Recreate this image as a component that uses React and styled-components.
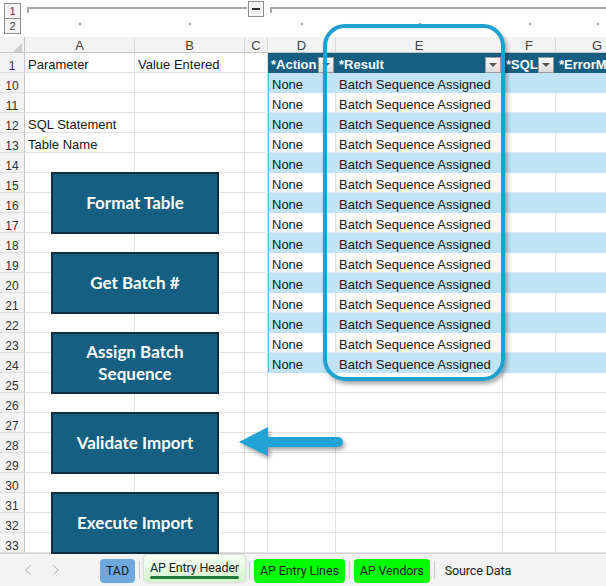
import React from "react"
import styled, { createGlobalStyle } from "styled-components"
import { ChevronLeft, ChevronRight } from "lucide-react"

const COLS = "25px 110px 110px 23px 68px 167px 53px 83px"

const GlobalStyle = createGlobalStyle`
  html, body {
    margin: 0;
    padding: 0;
  }
  body {
    width: 606px;
    height: 586px;
    overflow: hidden;
    background: #fff;
  }
`

const Page = styled.div`
  position: relative;
  width: 606px;
  height: 586px;
  overflow: hidden;
  display: flex;
  flex-direction: column;
  background: #fff;
  font-family: "Liberation Sans", Arial, sans-serif;
`

/* outline (grouping) bar */
const OutlineBar = styled.div`
  flex: none;
  display: grid;
  grid-template-columns: ${COLS};
  grid-template-rows: 17px 20px;
  height: 37px;
`

const LevelStack = styled.div`
  grid-row: 1 / span 2;
  display: flex;
  flex-direction: column;
  padding: 3px 0 0 4px;
`

const LevelButton = styled.div`
  width: 17px;
  height: 16px;
  box-sizing: border-box;
  border: 1px solid #8f8f8f;
  background: #f4f4f4;
  color: #444;
  font-size: 11px;
  line-height: 14px;
  text-align: center;

  & + & {
    margin-top: -1px;
  }
`

const Bracket = styled.div`
  grid-column: ${(p) => p.$span};
  display: flex;
  align-items: flex-start;
  padding-left: 2px;
`

const BracketLine = styled.div`
  flex: 1;
  height: 4px;
  margin-top: 7px;
  border-top: 2px solid #a8a8a8;
  border-left: 2px solid #a8a8a8;
`

const CollapseButton = styled.div`
  flex: none;
  width: 16px;
  height: 16px;
  box-sizing: border-box;
  margin: 1px 4px 0 1px;
  border: 1px solid #8f8f8f;
  background: #f4f4f4;
  display: flex;
  align-items: center;
  justify-content: center;

  &::before {
    content: "";
    width: 8px;
    height: 2px;
    background: #333;
  }
`

const DotCell = styled.div`
  display: flex;
  justify-content: center;
  padding-top: 6px;

  &::before {
    content: "";
    width: 2px;
    height: 2px;
    background: ${(p) => (p.$hidden ? "transparent" : "#9c9c9c")};
  }
`

/* column letters */
const ColumnHeaderRow = styled.div`
  flex: none;
  display: grid;
  grid-template-columns: ${COLS};
  height: 16px;
  box-sizing: border-box;
  background: #f3f3f3;
  border-bottom: 1px solid #c6c6c6;
`

const Corner = styled.div`
  position: relative;
  border-right: 1px solid #c6c6c6;

  &::after {
    content: "";
    position: absolute;
    right: 2px;
    bottom: 2px;
    border-left: 9px solid transparent;
    border-bottom: 9px solid #cfcfcf;
  }
`

const ColumnLetter = styled.div`
  border-right: 1px solid #d9d9d9;
  color: #444;
  font-size: 13px;
  line-height: 17px;
  text-align: center;
`

/* grid rows */
const SheetRow = styled.div`
  flex: none;
  display: grid;
  grid-template-columns: ${COLS};
  height: 20px;
`

const RowNumber = styled.div`
  box-sizing: border-box;
  height: 20px;
  padding-top: 3px;
  background: #f3f3f3;
  border-right: 1px solid #c6c6c6;
  border-bottom: 1px solid #dcdcdc;
  color: #333;
  font-size: 12px;
  line-height: 20px;
  text-align: center;
`

const Cell = styled.div`
  box-sizing: border-box;
  height: 20px;
  padding: 4px 3px 0;
  border-right: 1px solid #e1e1e1;
  border-bottom: 1px solid #e1e1e1;
  color: #161616;
  font-size: 13px;
  line-height: 16px;
  white-space: nowrap;
`

const TableCell = styled(Cell)`
  background: ${(p) => (p.$band ? "#c0e4f5" : "#fff")};
  border-right-color: ${(p) => (p.$band ? "#c0e4f5" : "#e1e1e1")};
  border-bottom-color: ${(p) => (p.$band ? "#c0e4f5" : "#d6e9f3")};
  border-left: ${(p) => (p.$first ? "1px solid #5eb1de" : "none")};
`

const HeadCell = styled(Cell)`
  display: flex;
  align-items: center;
  justify-content: space-between;
  padding-right: 1px;
  background: #156082;
  border-right-color: #156082;
  border-bottom: none;
  color: #fff;
  font-weight: 700;
  overflow: hidden;
`

const FilterButton = styled.span`
  flex: none;
  width: 16px;
  height: 16px;
  box-sizing: border-box;
  border: 1px solid #9a9a9a;
  background: linear-gradient(#fdfdfd, #dcdcdc);
  display: flex;
  align-items: center;
  justify-content: center;

  &::before {
    content: "";
    border-left: 4px solid transparent;
    border-right: 4px solid transparent;
    border-top: 4px solid #555;
  }
`

/* shapes floating over the sheet */
const MacroButton = styled.div`
  position: absolute;
  left: 51px;
  top: ${(p) => p.$top}px;
  width: 168px;
  height: 62px;
  box-sizing: border-box;
  display: flex;
  align-items: center;
  justify-content: center;
  background: #156082;
  border: 2px solid #0c2e40;
  color: #fff;
  font-family: Lato, "Open Sans", sans-serif;
  font-size: 17px;
  font-weight: 700;
  line-height: 22px;
  text-align: center;
`

const Highlight = styled.div`
  position: absolute;
  left: 323px;
  top: 24px;
  width: 182px;
  height: 357px;
  box-sizing: border-box;
  border: 4.5px solid #1fa0d3;
  border-radius: 22px;
  box-shadow: 2px 3px 4px rgba(0, 0, 0, 0.35);
  pointer-events: none;
`

const Arrow = styled.svg`
  position: absolute;
  left: 236px;
  top: 420px;
  width: 112px;
  height: 44px;
  overflow: visible;
  filter: drop-shadow(2px 3px 2px rgba(0, 0, 0, 0.35));
`

/* sheet tabs */
const TabBar = styled.div`
  flex: 1;
  display: flex;
  align-items: flex-start;
  padding-left: 14px;
  background: #f3f3f3;
  border-top: 1px solid #d4d4d4;
  font-family: Roboto, "Noto Sans", sans-serif;
`

const NavButton = styled.span`
  width: 28px;
  height: 32px;
  display: flex;
  align-items: center;
  justify-content: center;
  color: #a8a8a8;
`

const TabGroup = styled.div`
  display: flex;
  align-items: flex-start;
  gap: 4px;
  margin-left: 30px;
`

const SheetTab = styled.div`
  margin-top: 5px;
  height: 24px;
  padding: 0 6px;
  border-radius: 4px;
  background: ${(p) => p.$color || "transparent"};
  color: #1c1c1c;
  font-size: 12.5px;
  letter-spacing: -0.12px;
  line-height: 24px;
  white-space: nowrap;
`

const ActiveTab = styled(SheetTab)`
  position: relative;
  margin-top: 1px;
  height: 27px;
  line-height: 25px;
  background: linear-gradient(#f6fff3, #d3f5cb);
  box-shadow: 0 0 3px rgba(0, 0, 0, 0.25);

  &::after {
    content: "";
    position: absolute;
    left: 6px;
    right: 6px;
    bottom: 3px;
    height: 3px;
    border-radius: 2px;
    background: #217a36;
  }
`

const TabDivider = styled.span`
  width: 1px;
  height: 18px;
  margin-top: 7px;
  background: #c8c8c8;
`

const letters = ["A", "B", "C", "D", "E", "F", "G"]

const leftLabels = { 12: "SQL Statement", 13: "Table Name" }

const tableRows = Array.from({ length: 15 }, (_, i) => 10 + i)
const plainRows = Array.from({ length: 9 }, (_, i) => 25 + i)

const buttons = [
  { top: 172, label: "Format Table" },
  { top: 252, label: "Get Batch #" },
  { top: 332, label: ["Assign Batch", "Sequence"] },
  { top: 412, label: "Validate Import" },
  { top: 492, label: "Execute Import" },
]

const TableLine = ({ n }) => {
  const band = n % 2 === 0
  return (
    <SheetRow>
      <RowNumber>{n}</RowNumber>
      <Cell>{leftLabels[n]}</Cell>
      <Cell />
      <Cell />
      <TableCell $band={band} $first>
        None
      </TableCell>
      <TableCell $band={band}>Batch Sequence Assigned</TableCell>
      <TableCell $band={band} />
      <TableCell $band={band} />
    </SheetRow>
  )
}

const PlainLine = ({ n }) => (
  <SheetRow>
    <RowNumber>{n}</RowNumber>
    {letters.map((l) => (
      <Cell key={l} />
    ))}
  </SheetRow>
)

export default function App() {
  return (
    <Page>
      <GlobalStyle />

      <OutlineBar>
        <LevelStack>
          <LevelButton>1</LevelButton>
          <LevelButton>2</LevelButton>
        </LevelStack>
        <Bracket $span="2 / 5">
          <BracketLine />
          <CollapseButton />
        </Bracket>
        <Bracket $span="5 / 9">
          <BracketLine />
        </Bracket>
        {letters.map((l) => (
          <DotCell key={l} $hidden={l === "C"} />
        ))}
      </OutlineBar>

      <ColumnHeaderRow>
        <Corner />
        {letters.map((l) => (
          <ColumnLetter key={l}>{l}</ColumnLetter>
        ))}
      </ColumnHeaderRow>

      <SheetRow>
        <RowNumber>1</RowNumber>
        <Cell>Parameter</Cell>
        <Cell>Value Entered</Cell>
        <Cell />
        <HeadCell>
          *Action
          <FilterButton />
        </HeadCell>
        <HeadCell>
          *Result
          <FilterButton />
        </HeadCell>
        <HeadCell>
          *SQL
          <FilterButton />
        </HeadCell>
        <HeadCell>*ErrorMessage</HeadCell>
      </SheetRow>

      {tableRows.map((n) => (
        <TableLine key={n} n={n} />
      ))}
      {plainRows.map((n) => (
        <PlainLine key={n} n={n} />
      ))}

      <TabBar>
        <NavButton>
          <ChevronLeft size={18} strokeWidth={1.3} />
        </NavButton>
        <NavButton>
          <ChevronRight size={18} strokeWidth={1.3} />
        </NavButton>
        <TabGroup>
          <SheetTab $color="#6fa8dc">TAD</SheetTab>
          <TabDivider />
          <ActiveTab>AP Entry Header</ActiveTab>
          <TabDivider />
          <SheetTab $color="#00ff00">AP Entry Lines</SheetTab>
          <TabDivider />
          <SheetTab $color="#00ff00">AP Vendors</SheetTab>
          <TabDivider />
          <SheetTab>Source Data</SheetTab>
        </TabGroup>
      </TabBar>

      {buttons.map((b) => (
        <MacroButton key={b.top} $top={b.top}>
          {Array.isArray(b.label) ? (
            <span>
              {b.label[0]}
              <br />
              {b.label[1]}
            </span>
          ) : (
            b.label
          )}
        </MacroButton>
      ))}

      <Highlight />

      <Arrow viewBox="0 0 112 44">
        <path
          d="M3 22 L32 7 L32 17 L102 17 A5 5 0 0 1 102 27 L32 27 L32 36 Z"
          fill="#22a3d6"
        />
      </Arrow>
    </Page>
  )
}
